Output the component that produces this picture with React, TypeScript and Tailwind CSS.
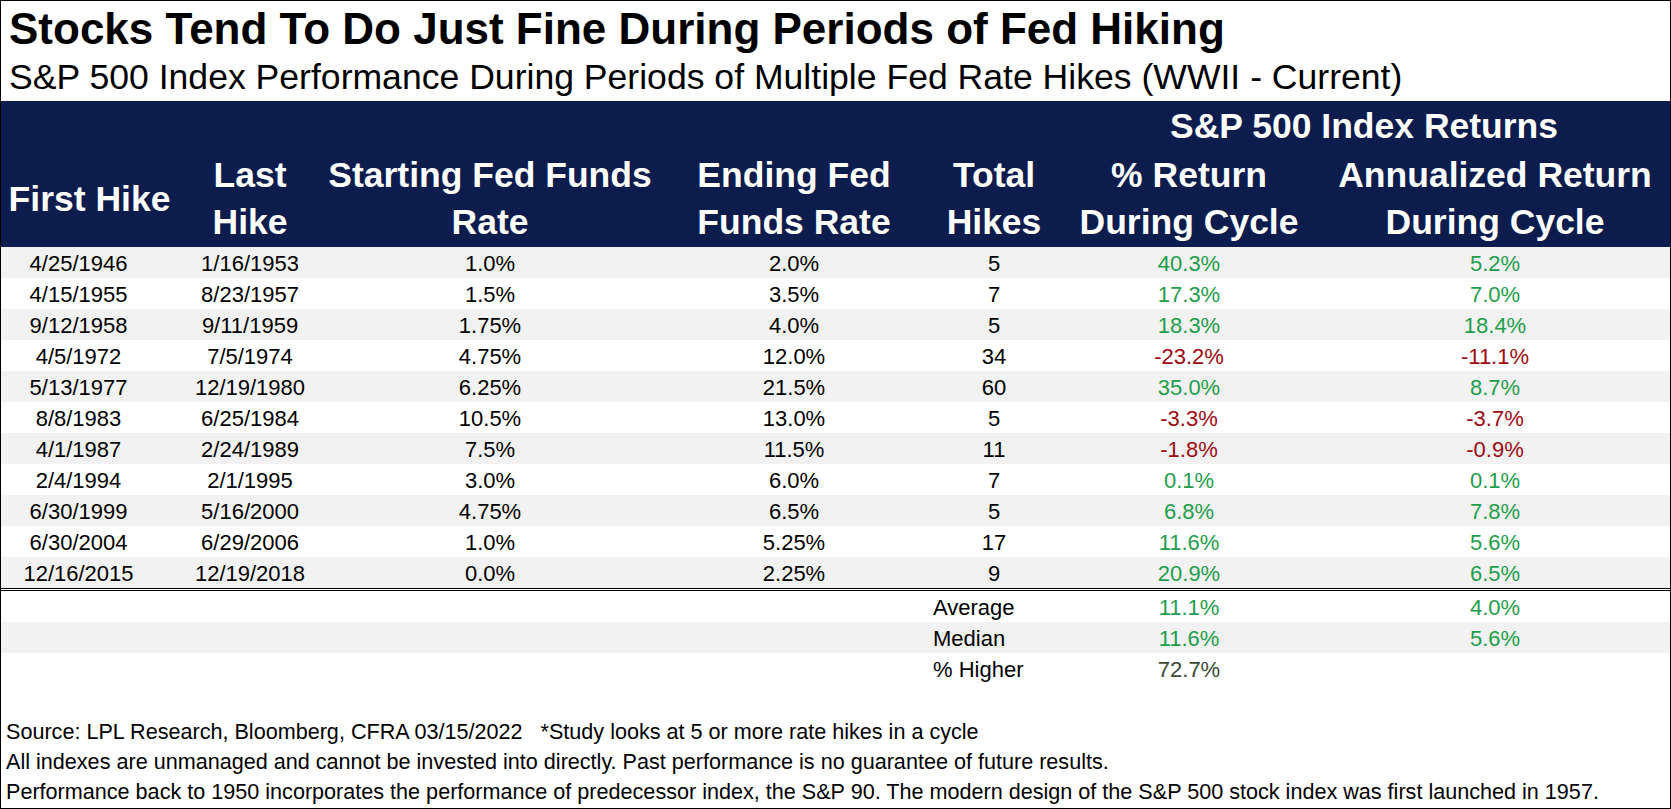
const rows = [
  ["4/25/1946", "1/16/1953", "1.0%", "2.0%", "5", "40.3%", "5.2%"],
  ["4/15/1955", "8/23/1957", "1.5%", "3.5%", "7", "17.3%", "7.0%"],
  ["9/12/1958", "9/11/1959", "1.75%", "4.0%", "5", "18.3%", "18.4%"],
  ["4/5/1972", "7/5/1974", "4.75%", "12.0%", "34", "-23.2%", "-11.1%"],
  ["5/13/1977", "12/19/1980", "6.25%", "21.5%", "60", "35.0%", "8.7%"],
  ["8/8/1983", "6/25/1984", "10.5%", "13.0%", "5", "-3.3%", "-3.7%"],
  ["4/1/1987", "2/24/1989", "7.5%", "11.5%", "11", "-1.8%", "-0.9%"],
  ["2/4/1994", "2/1/1995", "3.0%", "6.0%", "7", "0.1%", "0.1%"],
  ["6/30/1999", "5/16/2000", "4.75%", "6.5%", "5", "6.8%", "7.8%"],
  ["6/30/2004", "6/29/2006", "1.0%", "5.25%", "17", "11.6%", "5.6%"],
  ["12/16/2015", "12/19/2018", "0.0%", "2.25%", "9", "20.9%", "6.5%"],
];

const summary = [
  { label: "Average", ret: "11.1%", ann: "4.0%", shade: false },
  { label: "Median", ret: "11.6%", ann: "5.6%", shade: true },
  { label: "% Higher", ret: "72.7%", ann: "", shade: false },
];

const cols = "grid grid-cols-[177px_144px_336px_272px_128px_262px_1fr]";

function tone(v: string) {
  return v.startsWith("-") ? "text-[#9c0a12]" : "text-[#1f9d4c]";
}

export default function App() {
  return (
    <div className="h-[809px] w-[1671px] overflow-hidden border border-black bg-white font-['Liberation_Sans',Arial,sans-serif] text-black">
      {/* Titles */}
      <div className="h-[56px] pl-[8px] pt-[4px] text-[44px] font-bold leading-[48px]">
        Stocks Tend To Do Just Fine During Periods of Fed Hiking
      </div>
      <div className="h-[44px] pl-[8px] text-[35.6px] leading-[40px]">
        S&amp;P 500 Index Performance During Periods of Multiple Fed Rate Hikes (WWII - Current)
      </div>

      {/* Header */}
      <div className="bg-[#0b1c4d] text-[35.5px] font-bold leading-[47px] text-white">
        <div className={`${cols} h-[50px] items-center`}>
          <div className="col-span-2 col-start-6 text-center">S&amp;P 500 Index Returns</div>
        </div>
        <div className={`${cols} h-[96px] items-center text-center`}>
          <div>First Hike</div>
          <div>
            Last
            <br />
            Hike
          </div>
          <div>
            Starting Fed Funds
            <br />
            Rate
          </div>
          <div>
            Ending Fed
            <br />
            Funds Rate
          </div>
          <div>
            Total
            <br />
            Hikes
          </div>
          <div>
            % Return
            <br />
            During Cycle
          </div>
          <div>
            Annualized Return
            <br />
            During Cycle
          </div>
        </div>
      </div>

      {/* Data rows */}
      <div className="border-b-[3px] border-double border-black text-[22px]">
        {rows.map((r, i) => (
          <div
            key={r[0]}
            className={`${cols} h-[31px] items-center text-center ${i % 2 === 0 ? "bg-[#f2f2f2]" : "bg-white"}`}
          >
            <div className="pr-[22px]">{r[0]}</div>
            <div>{r[1]}</div>
            <div>{r[2]}</div>
            <div>{r[3]}</div>
            <div>{r[4]}</div>
            <div className={tone(r[5])}>{r[5]}</div>
            <div className={tone(r[6])}>{r[6]}</div>
          </div>
        ))}
      </div>

      {/* Summary */}
      <div className="text-[22px]">
        {summary.map((s) => (
          <div
            key={s.label}
            className={`${cols} h-[31px] items-center ${s.shade ? "bg-[#f2f2f2]" : "bg-white"}`}
          >
            <div className="col-start-5 ml-[3px] whitespace-nowrap">{s.label}</div>
            <div className={`text-center ${s.label === "% Higher" ? "text-[#3b4838]" : "text-[#1f9d4c]"}`}>
              {s.ret}
            </div>
            <div className="text-center text-[#1f9d4c]">{s.ann}</div>
          </div>
        ))}
      </div>

      {/* Footnotes */}
      <div className="mt-[33px] pl-[5px] text-[21.6px] leading-[30px]">
        <p className="whitespace-pre">
          Source: LPL Research, Bloomberg, CFRA 03/15/2022   *Study looks at 5 or more rate hikes in a cycle
        </p>
        <p>All indexes are unmanaged and cannot be invested into directly. Past performance is no guarantee of future results.</p>
        <p>
          Performance back to 1950 incorporates the performance of predecessor index, the S&amp;P 90. The modern design of the
          S&amp;P 500 stock index was first launched in 1957.
        </p>
      </div>
    </div>
  );
}
